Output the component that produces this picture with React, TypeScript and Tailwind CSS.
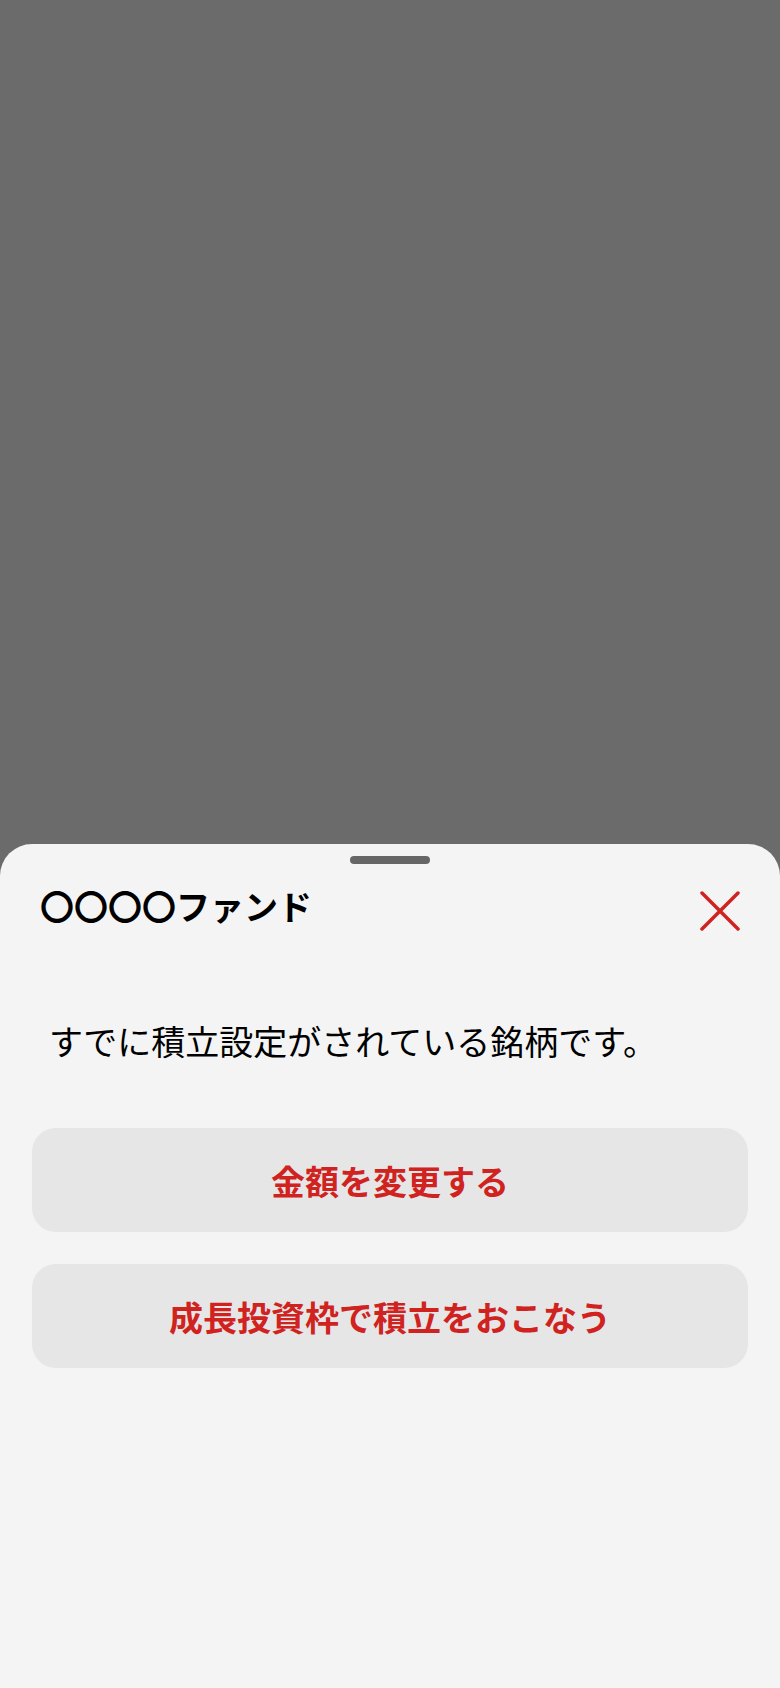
const jp = "font-['Noto_Sans_CJK_JP','Noto_Sans',sans-serif]";

function CloseIcon() {
  return (
    <svg width="40" height="40" viewBox="0 0 40 40" fill="none" aria-hidden="true">
      <path d="M2 2L38 38M38 2L2 38" stroke="#d0231f" strokeWidth="3.5" strokeLinecap="round" />
    </svg>
  );
}

export default function App() {
  return (
    <main className={`flex min-h-screen w-full flex-col justify-end bg-[#6b6b6b] ${jp}`}>
      <section className="flex h-[844px] flex-col rounded-t-[32px] bg-[#f4f4f4] pt-3">
        <div className="mx-auto h-2 w-20 rounded-full bg-[#666666]" />

        <header className="mt-3 flex h-16 items-start justify-between pl-10 pr-10">
          <h1 className="mt-[10px] text-[34px] font-bold leading-[40px] text-black">〇〇〇〇ファンド</h1>
          <button type="button" aria-label="閉じる" className="mt-[15px] flex h-10 w-10 items-center justify-center">
            <CloseIcon />
          </button>
        </header>

        <p className="mt-[77px] pl-[49px] text-[34px] leading-[48px] text-black">
          すでに積立設定がされている銘柄です。
        </p>

        <div className="mt-[63px] flex flex-col gap-8 px-8">
          {["金額を変更する", "成長投資枠で積立をおこなう"].map((label) => (
            <button
              key={label}
              type="button"
              className="flex h-[104px] w-full items-center justify-center rounded-[24px] bg-[#e6e6e6] text-[34px] font-bold text-[#d0231f]"
            >
              {label}
            </button>
          ))}
        </div>
      </section>
    </main>
  );
}
